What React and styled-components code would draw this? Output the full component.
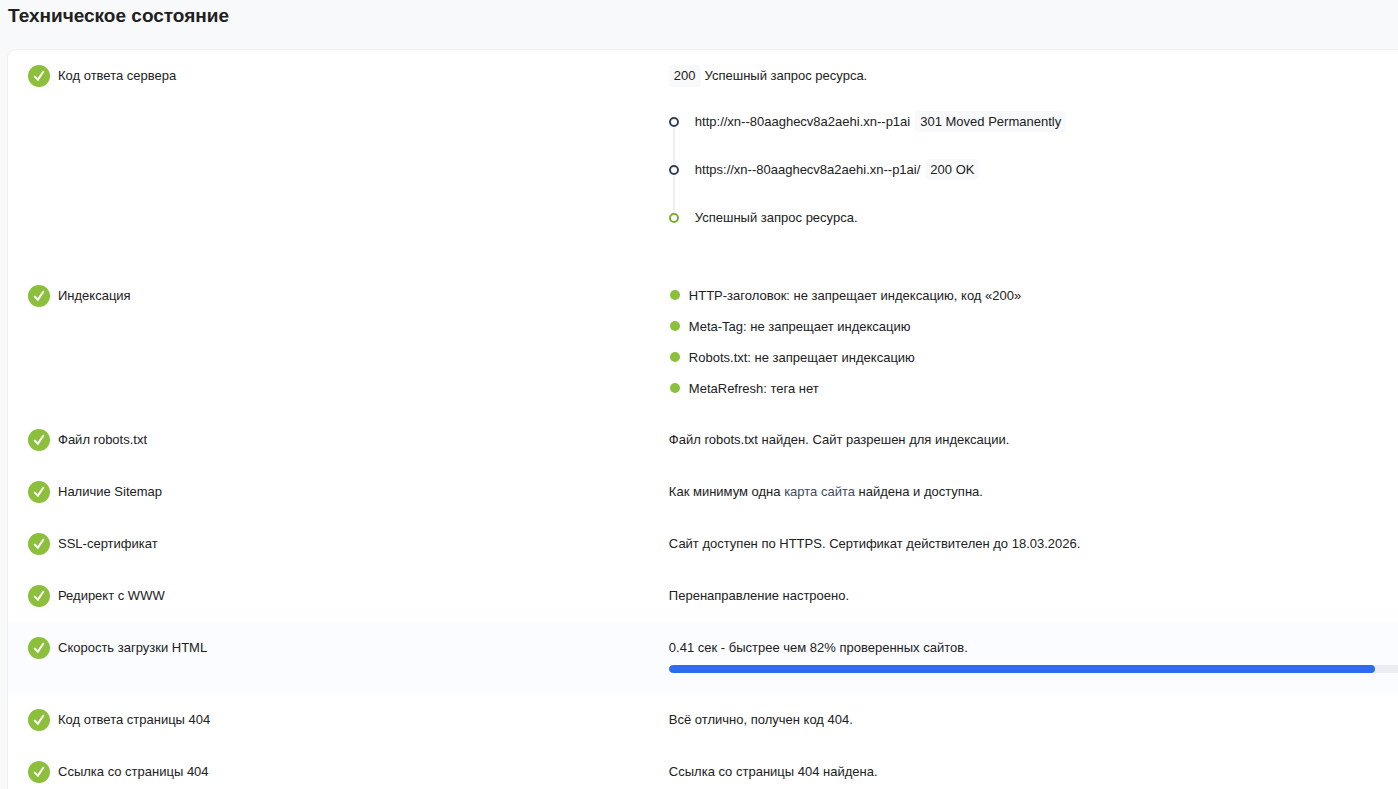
import React from "react";
import styled, { createGlobalStyle } from "styled-components";

const GlobalStyle = createGlobalStyle`
  *, *::before, *::after { box-sizing: border-box; }
  html { background: #f8f9fb; }
  body {
    margin: 0;
    color: #212121;
    font-family: "Liberation Sans", Arial, sans-serif;
    font-size: 13px;
    line-height: 22px;
  }
`;

const Page = styled.main`
  min-height: 100vh;
  padding-left: 8px;
  overflow: hidden;
`;

const Title = styled.h1`
  margin: 0 0 18px;
  font-size: 19px;
  line-height: 32px;
  font-weight: 700;
`;

/* The report is wider than the viewport and runs off its right edge. */
const Card = styled.section`
  margin-right: -152px;
  background: #ffffff;
  border-radius: 8px;
  box-shadow: 0 0 0 1px #f0f0f2;
`;

const Report = styled.table`
  width: 100%;
  table-layout: fixed;
  border-collapse: collapse;
`;

const Row = styled.tr`
  background: ${(p) => (p.$active ? "#fbfcff" : "transparent")};
`;

const NameCell = styled.th`
  width: calc(100% * 3 / 7);
  padding: 15px 20px;
  font-weight: 400;
  text-align: left;
  vertical-align: top;
`;

const Name = styled.div`
  display: flex;
  gap: 8px;
`;

const ValueCell = styled.td`
  padding: 15px 20px 15px 0;
  vertical-align: top;
`;

const Tag = styled.span`
  display: inline-block;
  padding: 0 5px;
  line-height: 21px;
  vertical-align: top;
  background: #f8f9fb;
  border-radius: 4px;
`;

const Status = styled.div`
  display: flex;
  gap: 4px;
`;

const Steps = styled.ol`
  margin: 24px 0 0;
  padding: 0;
  list-style: none;
`;

const Step = styled.li`
  display: flex;
  gap: 16px;
  min-height: 48px;
`;

const StepMarker = styled.span`
  display: flex;
  flex-direction: column;
  align-items: center;
  width: 10px;
  margin: 6px 0 -6px;

  &::before {
    content: "";
    flex: none;
    width: 10px;
    height: 10px;
    border: 2px solid ${(p) => (p.$final ? "#7cad34" : "#34425a")};
    border-radius: 50%;
  }

  &::after {
    content: "";
    flex: 1;
    width: 2px;
    background: ${(p) => (p.$final ? "transparent" : "#efefef")};
  }
`;

const StepBody = styled.div`
  display: flex;
  gap: 5px;
`;

const Facts = styled.ul`
  display: flex;
  flex-direction: column;
  gap: 10px;
  margin: 0;
  padding: 0;
  list-style: none;
  line-height: 21px;
`;

const Fact = styled.li`
  display: flex;
  gap: 9px;
  padding-left: 1px;

  &::before {
    content: "";
    width: 10px;
    height: 10px;
    margin-top: 5px;
    border-radius: 50%;
    background: #8bbf3c;
  }
`;

const SiteLink = styled.a`
  color: #414b5e;
  text-decoration: none;
`;

const Track = styled.div`
  height: 8px;
  margin: 6px 0;
  overflow: hidden;
  border-radius: 4px;
  background: #ebedf1;
`;

const Fill = styled.div`
  height: 100%;
  border-radius: 4px;
  background: #2f6bf2;
`;

const CheckSvg = styled.svg`
  flex: none;
  display: block;
  width: 22px;
  height: 22px;
`;

function Check() {
  return (
    <CheckSvg viewBox="0 0 22 22" aria-hidden="true">
      <circle cx="11" cy="11" r="11" fill="#8bbf3c" />
      <path
        d="M6.8 11.6l3.1 3 5.4-7.9"
        fill="none"
        stroke="#fff"
        strokeWidth="2"
        strokeLinecap="round"
        strokeLinejoin="miter"
      />
    </CheckSvg>
  );
}

function Redirects() {
  return (
    <>
      <Status>
        <Tag>200</Tag>
        <span>Успешный запрос ресурса.</span>
      </Status>
      <Steps>
        <Step>
          <StepMarker />
          <StepBody>
            <span>http://xn--80aaghecv8a2aehi.xn--p1ai</span>
            <div>
              <Tag>301 Moved Permanently</Tag>
            </div>
          </StepBody>
        </Step>
        <Step>
          <StepMarker />
          <StepBody>
            <span>https://xn--80aaghecv8a2aehi.xn--p1ai/</span>
            <div>
              <Tag>200 OK</Tag>
            </div>
          </StepBody>
        </Step>
        <Step>
          <StepMarker $final />
          <StepBody>Успешный запрос ресурса.</StepBody>
        </Step>
      </Steps>
    </>
  );
}

function Speed({ percent }) {
  return (
    <>
      0.41 сек - быстрее чем {percent}% проверенных сайтов.
      <Track
        role="meter"
        aria-label="Скорость загрузки HTML"
        aria-valuemin={0}
        aria-valuemax={100}
        aria-valuenow={percent}
      >
        <Fill style={{ width: `${percent}%` }} />
      </Track>
    </>
  );
}

const checks = [
  { name: "Код ответа сервера", value: <Redirects /> },
  {
    name: "Индексация",
    value: (
      <Facts>
        <Fact>HTTP-заголовок: не запрещает индексацию, код «200»</Fact>
        <Fact>Meta-Tag: не запрещает индексацию</Fact>
        <Fact>Robots.txt: не запрещает индексацию</Fact>
        <Fact>MetaRefresh: тега нет</Fact>
      </Facts>
    ),
  },
  { name: "Файл robots.txt", value: "Файл robots.txt найден. Сайт разрешен для индексации." },
  {
    name: "Наличие Sitemap",
    value: (
      <>
        Как минимум одна <SiteLink href="#sitemap">карта сайта</SiteLink> найдена и доступна.
      </>
    ),
  },
  { name: "SSL-сертификат", value: "Сайт доступен по HTTPS. Сертификат действителен до 18.03.2026." },
  { name: "Редирект с WWW", value: "Перенаправление настроено." },
  { name: "Скорость загрузки HTML", value: <Speed percent={82} />, active: true },
  { name: "Код ответа страницы 404", value: "Всё отлично, получен код 404." },
  { name: "Ссылка со страницы 404", value: "Ссылка со страницы 404 найдена." },
];

export default function App() {
  return (
    <>
      <GlobalStyle />
      <Page>
        <Title>Техническое состояние</Title>
        <Card>
          <Report>
            <tbody>
              {checks.map((check) => (
                <Row key={check.name} $active={check.active}>
                  <NameCell scope="row">
                    <Name>
                      <Check />
                      {check.name}
                    </Name>
                  </NameCell>
                  <ValueCell>{check.value}</ValueCell>
                </Row>
              ))}
            </tbody>
          </Report>
        </Card>
      </Page>
    </>
  );
}
